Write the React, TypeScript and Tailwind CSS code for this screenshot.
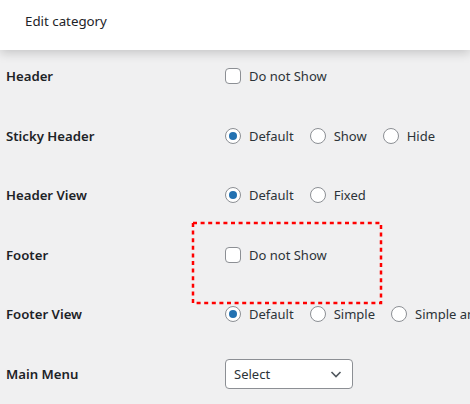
import React from "react";

const font = { fontFamily: '"Noto Sans", "Open Sans", sans-serif' };

function Radio({ checked }: { checked?: boolean }) {
  return (
    <span className="flex h-4 w-4 shrink-0 items-center justify-center rounded-full border border-[#8c8f94] bg-white">
      {checked && <span className="h-2 w-2 rounded-full bg-[#2271b1]" />}
    </span>
  );
}

function Check() {
  return <span className="block h-4 w-4 shrink-0 rounded-[4px] border border-[#8c8f94] bg-white" />;
}

function RadioGroup({ options, checked = 0 }: { options: string[]; checked?: number }) {
  return (
    <div className="flex items-center gap-4 whitespace-nowrap">
      {options.map((o, i) => (
        <label key={o} className="flex items-center gap-2">
          <Radio checked={i === checked} />
          <span>{o}</span>
        </label>
      ))}
    </div>
  );
}

function Row({ label, children }: { label: string; children: React.ReactNode }) {
  return (
    <div className="flex h-5 items-center">
      <div className="w-[219px] shrink-0 text-[13.2px] font-semibold text-[#1d2327]">{label}</div>
      <div className="flex items-center text-[#2c3338]">{children}</div>
    </div>
  );
}

export default function App() {
  return (
    <div
      className="relative h-[404px] w-[470px] overflow-hidden bg-[#f0f0f1] text-[13px] leading-5"
      style={font}
    >
      <div className="relative z-10 h-[50px] bg-white pl-[25px] pt-[11px] text-[13.3px] text-[#1d2327] shadow-[0_3px_10px_rgba(0,0,0,0.18)]">
        Edit category
      </div>
      <div className="flex flex-col gap-[39.6px] pl-[6px] pt-[16px]">
        <Row label="Header">
          <label className="flex items-center gap-2 whitespace-nowrap">
            <Check />
            <span>Do not Show</span>
          </label>
        </Row>
        <Row label="Sticky Header">
          <RadioGroup options={["Default", "Show", "Hide"]} />
        </Row>
        <Row label="Header View">
          <RadioGroup options={["Default", "Fixed"]} />
        </Row>
        <Row label="Footer">
          <label className="flex items-center gap-2 whitespace-nowrap">
            <Check />
            <span>Do not Show</span>
          </label>
        </Row>
        <Row label="Footer View">
          <RadioGroup options={["Default", "Simple", "Simple and Short"]} />
        </Row>
        <Row label="Main Menu">
          <div className="flex h-[30px] w-[128px] items-center justify-between rounded-[4px] border border-[#8c8f94] bg-white pl-[8px] pr-[8px]">
            <span>Select</span>
            <svg width="16" height="16" viewBox="0 0 16 16" fill="none">
              <path d="M3.5 6l4.5 4.5L12.5 6" stroke="#50575e" strokeWidth="1.6" />
            </svg>
          </div>
        </Row>
      </div>
      <svg className="absolute left-[191px] top-[221px]" width="192" height="84" viewBox="0 0 192 84">
        <rect x="2" y="2" width="188" height="80" fill="none" stroke="#ff0000" strokeWidth="2.5" strokeDasharray="4 3.6" />
      </svg>
    </div>
  );
}
